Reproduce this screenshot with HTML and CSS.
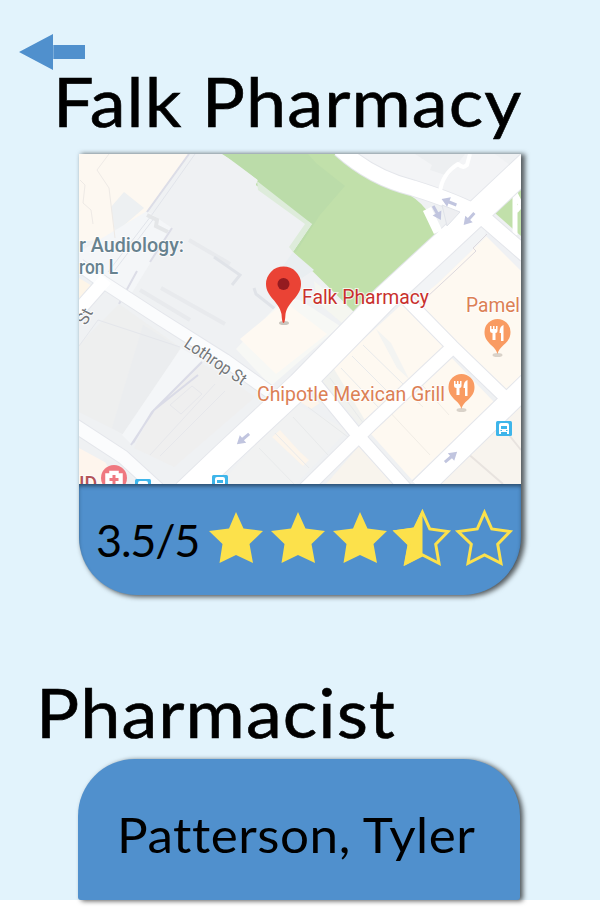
FILE: index.html
```html
<!DOCTYPE html>
<html lang="en">
<head>
<meta charset="utf-8">
<title>Falk Pharmacy</title>
<link rel="stylesheet" href="styles.css">
</head>
<body>
<main class="screen">
  <a class="back" aria-label="Back"><svg width="67" height="36" viewBox="0 0 67 36"><path d="M0 18 34 0V36Z M34.3 11H66V25H34.3Z"/></svg></a>
  <h1 class="title">Falk Pharmacy</h1>
  <section class="place">
    <svg class="map" viewBox="79 154 442 330" width="442" height="330">
      <defs>
        <g id="food"><ellipse cy="19" rx="5" ry="2" fill="#d9d2c9"/><path d="M0 18C-2 9-13 8-13 -4A13 13 0 0 1 13-4C13 8 2 9 0 18Z" fill="#f99b62"/><path d="M-7.500-10H-6V-7H-4.500V-10H-3V-7H-1.500V-10H0V-5Q0-3-2-3V4H-5V-3Q-7.500-3-7.500-5Z" fill="#fff"/><path d="M6-11Q2-10 2-3H3.500V5H6Z" fill="#fff"/></g>
        <g id="bus"><rect width="16" height="15" rx="1.500" fill="#3eb5ea"/><path d="M3 11V4Q3 2 5 2H11Q13 2 13 4V13H11V11H5V13H3Z" fill="#fff"/><path d="M5 5H11V8H5ZM4.500 9H6V10H4.500ZM10 9H11.500V10H10Z" fill="#3eb5ea"/></g>
        <path id="arrow" d="M-8-1.500H0V-5L8 0 0 5V1.500H-8Z" fill="#c1c5df"/>
      </defs>
      <rect x="79" y="154" width="442" height="330" fill="#eff1f3"/>
      <path d="M79 154H189L147 212 112 238 79 242Z" fill="#fdf8f1"/>
      <path d="M124 192 144 208 115 233 111 207Z" fill="#edf0f2"/>
      <path d="M147 211 79 252V270L103 282 130 296 172 228Z" fill="#f4f6f8"/>
      <path d="M79 278 97 289 79 302Z" fill="#fdf5e8"/>
      <g fill="none" stroke="#e1e4ea" stroke-width="1">
        <path d="M109 154 97 170 109 188 115 238M80 180 85 185 83 203 91 210 93 224" stroke="#eeeae6"/>
        <path d="M189 154 147 212M195 154 151 216 108 272M155 217 115 270"/>
        <path d="M189 240 230 264M161 288 225 324M140 290 190 320" stroke="#e8eaed" stroke-width="4"/>
        <path d="M172 228 150 262M137 271 119 304M189 154 147 212" stroke="#dcdde7" stroke-width="2"/>
        <path d="M147 215 157 220 156 226 168 232" stroke="#e4e6e8" stroke-width="4"/>
        <path d="M214 257 240 275 232 285M254 288 256 294 275 309" stroke="#e0e3e8" stroke-width="3"/>
      </g>
      <path d="M119 304 181 348 125 435 79 412V345Z" fill="#eeefef"/>
      <path d="M143 325 180 348 128 437 112 428Z" fill="#ebedef"/>
      <path d="M181 348 202 360 151 412 132 445 122 435Z" fill="#f4f6f8"/>
      <path d="M202 364 222 374 255 397 174 467 134 448 150 415Z" fill="#efefef"/>
      <path d="M202 362 152 412 133 443M198 375 154 410 131 445" fill="none" stroke="#dadbe7" stroke-width="2"/>
      <path d="M170 405 181 414 202 394 192 386ZM150 455 215 384M160 456 225 391" fill="none" stroke="#e6e7eb"/>
      <path d="M98 320 79 346M98 320 180 347" fill="none" stroke="#e4e6eb"/>
      <path d="M236 349 284 298 300 300 340 326 271 386Z" fill="#f7f8f5"/>
      <path d="M240 339 285 302 327 334 276 374Z" fill="#fef9f2"/>
      <path d="M222 154H345Q365 175 399 189Q436 207 436 238L355 313 293 252 312 224 256 185 258 180 237 163Z" fill="#c1e0aa"/>
      <path d="M223 154H308L316 163 345 186 320 215 296 252 293 252 312 224 256 185 258 180Z" fill="#bbdca9"/>
      <path d="M257 181 312 224 293 252 289 247 305 224 258 190ZM237 163 258 178" fill="#deecdb"/>
      <path d="M293 252 314 270 302 278 283 266Z" fill="#e9eef1"/>
      <path d="M314 281 325 290 355 313 342 323 317 302Z" fill="#f5f6f0"/>
      <path d="M352 154H495L510 165 469 203 437 191 374 164Z" fill="#f3f4f6"/>
      <path d="M415 154 432 165 430 170 448 176 465 154Z" fill="#edeff1"/>
      <path d="M495 213 521 187V236Z" fill="#c1e0aa"/>
      <path d="M515 190V235M515 193 521 205 516 211" fill="none" stroke="#fff" stroke-width="5"/>
      <path d="M481 223 521 259V383L501 393 411 305Z" fill="#fef9f1"/>
      <path d="M481 223 489 234 437 284 411 305 403 302Z" fill="#f2f4f6"/>
      <path d="M486 228 521 260V271L485 235Z" fill="#eff1f4"/>
      <path d="M487 234 473 248 476 251 455 271 428 296" fill="none" stroke="#ddd9de"/>
      <path d="M402 304 450 350 367 427 321 378Z" fill="#fef9f1"/>
      <path d="M334 369 366 422 361 427 321 380Z" fill="#f1f2ef"/>
      <path d="M376 329 391 343 409 379 397 368Z" fill="#f3f4f2"/>
      <path d="M294 403 348 430 296 484H220Z" fill="#f1f2f2"/>
      <path d="M299 401 307 395 320 403 311 409ZM280 430 300 452 309 460 303 466 272 437Z" fill="#fdf5eb"/>
      <path d="M308 407 352 440M293 417 328 455M275 433 309 468M259 448 294 484M330 378 364 424M341 368 379 408M352 356 391 395M363 345 403 384" fill="none" stroke="#e8eaeb"/>
      <path d="M450 356 494 402 412 480 371 434Z" fill="#fef9f1"/>
      <path d="M360 445 392 484H326Z" fill="#f8f4ed"/>
      <path d="M415 377 449 415M386 408 430 455M402 387 423 407" fill="none" stroke="#f1ede6"/>
      <path d="M521 405V484H440Z" fill="#f8f4ee"/>
      <path d="M466 452 503 484M501 425 521 450M461 458 492 431" fill="none" stroke="#e8e3df" stroke-width="2"/>
      <path d="M79 448 112 466 128 484H79Z" fill="#fef5ed"/>
      <path d="M103 457 130 476 138 484H116Z" fill="#eef0f2"/>
      <g fill="none" stroke="#e4e6eb" stroke-linejoin="round">
        <path d="M79 265 103 282 160 319 225 360 270 392" stroke-width="14"/><path d="M106 279 76 313" stroke-width="15"/>
        <path d="M74 425 123 457 158 489" stroke-width="15"/>
        <path d="M340 149Q372 178 413 188Q458 202 480 215L526 255" stroke-width="17"/>
        <path d="M530 163 450 238 385 298 300 385 225 455 185 493" stroke-width="27"/>
        <path d="M405 298 452 346 510 402M310 377 355 432 408 491" stroke-width="14"/>
        <path d="M455 345 370 425 305 489" stroke-width="15"/><path d="M530 382 465 445 420 489" stroke-width="23"/>
      </g>
      <g fill="none" stroke="#fff" stroke-linejoin="round">
        <path d="M79 265 103 282 160 319 225 360 270 392" stroke-width="12" stroke="#fbfcfd"/><path d="M106 279 76 313" stroke-width="13"/>
        <path d="M74 425 123 457 158 489" stroke-width="13" stroke="#fbfcfd"/>
        <path d="M340 149Q372 178 413 188Q458 202 480 215L526 255" stroke-width="15"/>
        <path d="M530 163 450 238 385 298 300 385 225 455 185 493" stroke-width="25"/>
        <path d="M427 209 438 232" stroke-width="9"/>
        <path d="M405 298 452 346 510 402M310 377 355 432 408 491" stroke-width="12"/>
        <path d="M455 345 370 425 305 489" stroke-width="13"/><path d="M530 382 465 445 420 489" stroke-width="21"/>
        <path d="M440 192Q442 174 458 164Q463 169 467 165L470 154" stroke-width="4"/>
      </g>
      <path d="M442 205 460 212 447 226Z" fill="#eeeff2" stroke="#e0e3e9"/>
      <use href="#arrow" transform="translate(449 202) rotate(202)"/>
      <use href="#arrow" transform="translate(437 213) rotate(61)"/>
      <use href="#arrow" transform="translate(469 219) rotate(132)"/>
      <use href="#arrow" transform="translate(243 439) rotate(140)"/>
      <use href="#arrow" transform="translate(451 457) rotate(-40)"/>
      <g class="label slate"><text x="79" y="251.500" textLength="105" lengthAdjust="spacingAndGlyphs">r Audiology:</text><text x="79" y="273.500" textLength="39" lengthAdjust="spacingAndGlyphs">ron L</text></g>
      <text class="label road" transform="translate(183 346) rotate(34)" textLength="71" lengthAdjust="spacingAndGlyphs">Lothrop St</text>
      <text class="label road" transform="translate(86 326) rotate(-62)">St</text>
      <text class="label red" x="302" y="304" textLength="127" lengthAdjust="spacingAndGlyphs">Falk Pharmacy</text>
      <text class="label orange" x="257" y="400.500" textLength="188" lengthAdjust="spacingAndGlyphs">Chipotle Mexican Grill</text>
      <text class="label orange" x="466" y="312" textLength="54" lengthAdjust="spacingAndGlyphs">Pamel</text>
      <text class="label maroon" x="79" y="491">ID</text>
      <use href="#food" x="461.500" y="391"/><use href="#food" x="497.500" y="336"/>
      <use href="#bus" x="496" y="421"/><use href="#bus" x="212" y="475"/><use href="#bus" x="135" y="479"/>
      <circle cx="114" cy="478" r="13" fill="#ef7880"/><path d="M106 474H122V487H106ZM110 474V471.500H118V474" fill="#fff" stroke="#fff" stroke-width="1.500"/><path d="M112.500 475H115.500V478H118.500V481H115.500V484H112.500V481H109.500V478H112.500Z" fill="#ef7880"/>
      <ellipse cx="284" cy="323" rx="5" ry="2" fill="#c9c5bd"/>
      <path d="M283.500 323Q282 323 281.500 314C279 301 266 297 266 284A17.500 17.500 0 0 1 301 284C301 297 288 301 285.500 314Q285 323 283.500 323Z" fill="#ea4335"/><circle cx="283.500" cy="284" r="6" fill="#951b20"/>
    </svg>
    <div class="rating">
      <span class="score">3.5/5</span>
      <svg class="stars" width="310" height="60" viewBox="0 0 310 60">
        <defs><path id="full" d="M31 4 38.500 20.500 58 23 44.500 36 48 55 31 47 14.500 55 17.500 36 4 23 24 20.500Z"/>
        <path id="line" fill="none" stroke="#fce14b" stroke-width="3" d="M31 4.500 38.300 21 56.500 23.600 44.200 36.200 47.500 55.300 31 47 14.500 55.300 17.800 36.200 4.700 23.600 23.700 21Z"/></defs>
        <g fill="#fce14b"><use href="#full"/><use href="#full" x="62"/><use href="#full" x="124"/><path d="M217.500 1 208.500 19.500 187.500 22.500 202.500 37 198.500 58 217.500 48Z"/></g>
        <use href="#line" x="186.500"/><use href="#line" x="248.500"/>
      </svg>
    </div>
  </section>
  <h2 class="subtitle">Pharmacist</h2>
  <section class="person"><span class="name">Patterson, Tyler</span></section>
</main>
</body>
</html>
```
FILE: styles.css
```css
* { box-sizing: border-box; }
body {
  margin: 0;
  height: 909px;
  background: #fff;
  color: #000;
  font-family: Lato, "Noto Sans", sans-serif;
  overflow: hidden;
}
.screen {
  height: 900px;
  padding-top: 34px;
  background: #e2f3fc;
}
.back { display: block; height: 36px; margin-left: 19px; }
.back svg, .map, .stars { display: block; }
.back path { fill: #5090cd; }
.title, .subtitle {
  margin: 0;
  height: 84px;
  font-size: 68px;
  font-weight: 400;
  line-height: 84px;
  letter-spacing: 1px;
  white-space: nowrap;
  transform: scaleX(1.06);
  transform-origin: 0 50%;
  -webkit-text-stroke: .6px #000;
}
.title { width: 440px; margin-left: 53px; margin-top: -11px; }
.place {
  width: 442px;
  height: 441px;
  margin: 11px 0 0 79px;
  border-radius: 0 0 58px 58px;
  background: #5090cd;
  box-shadow: 3px 1px 5px 1px rgba(0, 0, 0, .62);
}
.rating {
  display: flex;
  align-items: center;
  height: 112px;
  padding-left: 17px;
  box-shadow: inset 0 3px 4px -1px rgba(0, 0, 0, .5);
  border-radius: 0 0 58px 58px;
}
.score { width: 109px; font-size: 45px; letter-spacing: -1.2px; line-height: 60px; white-space: nowrap; }
.stars { flex: none; margin-top: -4px; }
.subtitle { width: 340px; margin: 75px 0 0 36px; }
.person {
  width: 442px;
  height: 141px;
  margin: 5px 0 0 78px;
  padding-left: 39px;
  border-radius: 57px 57px 3px 3px;
  background: #5090cd;
  box-shadow: 3px 1px 5px rgba(0, 0, 0, .65);
  font-size: 49px;
  letter-spacing: .5px;
  line-height: 150px;
  white-space: nowrap;
}
.name { display: inline-block; transform: scaleX(1.045); transform-origin: 0 50%; }
.label {
  font-family: Roboto, sans-serif;
  font-size: 19.5px;
  paint-order: stroke;
  stroke: #fff;
  stroke-opacity: .75;
  stroke-width: 2px;
}
.slate { fill: #67828f; font-weight: 500; }
.road { fill: #737679; font-size: 17px; }
.red { fill: #c9302d; }
.orange { fill: #dc8055; }
.maroon { fill: #b45358; font-weight: 500; }
```
